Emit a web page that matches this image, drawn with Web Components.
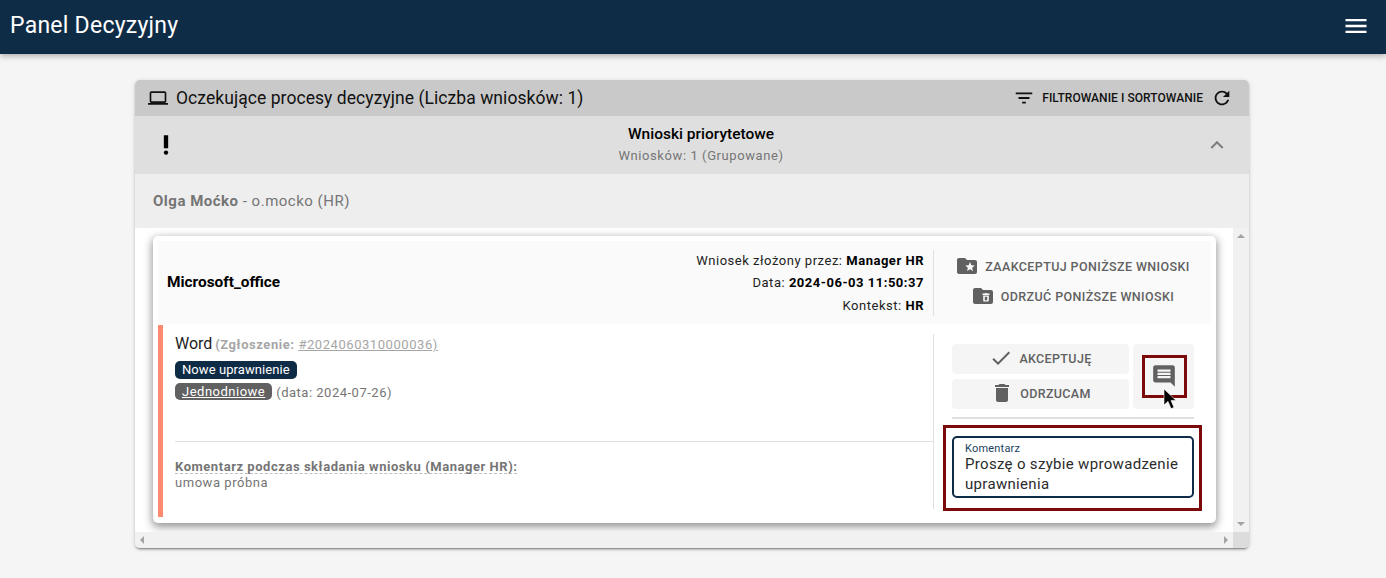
<!DOCTYPE html>
<html lang="pl">
<head>
<meta charset="utf-8">
<title>Panel Decyzyjny</title>
<style>
html, body { margin: 0; height: 100%; overflow: hidden; }
body { background: #f5f5f5; font-family: Roboto, "Liberation Sans", sans-serif; color: #212121; }
</style>
</head>
<body>
<app-toolbar>Panel Decyzyjny</app-toolbar>
<decision-panel>
  <group-header title-text="Wnioski priorytetowe" sub-text="Wniosków: 1 (Grupowane)"></group-header>
  <person-row><b>Olga Moćko</b> - o.mocko (HR)</person-row>
  <scroll-box>
    <request-card>
      <card-header></card-header>
      <request-row></request-row>
    </request-card>
  </scroll-box>
</decision-panel>

<script>
const ICONS = {
  menu: '<path d="M3 18h18v-2H3v2zm0-5h18v-2H3v2zm0-7v2h18V6H3z"/>',
  laptop: '<path d="M20 18c1.1 0 1.99-.9 1.99-2L22 6c0-1.1-.9-2-2-2H4c-1.1 0-2 .9-2 2v10c0 1.1.9 2 2 2H0v2h24v-2h-4zM4 6h16v10H4V6z"/>',
  filter: '<path d="M10 18h4v-2h-4v2zM3 6v2h18V6H3zm3 7h12v-2H6v2z"/>',
  refresh: '<path d="M17.65 6.35C16.2 4.9 14.21 4 12 4c-4.42 0-7.99 3.58-7.99 8s3.57 8 7.99 8c3.73 0 6.84-2.55 7.73-6h-2.08c-.82 2.33-3.04 4-5.65 4-3.31 0-6-2.69-6-6s2.69-6 6-6c1.66 0 3.14.69 4.22 1.78L13 11h7V4l-2.35 2.35z"/>',
  priority: '<circle cx="12" cy="19" r="2"/><path d="M10 3h4v12h-4z"/>',
  less: '<path d="M12 8l-6 6 1.41 1.41L12 10.83l4.59 4.58L18 14z"/>',
  folderstar: '<path d="M20 6h-8l-2-2H4c-1.1 0-1.99.9-1.99 2L2 18c0 1.1.9 2 2 2h16c1.1 0 2-.9 2-2V8c0-1.1-.9-2-2-2zm-2.06 11L15 15.28 12.06 17l.78-3.33-2.59-2.24 3.41-.29L15 8l1.34 3.14 3.41.29-2.59 2.24.78 3.33z"/>',
  foldertrash: '<path fill-rule="evenodd" d="M20 6h-8l-2-2H4c-1.1 0-1.99.9-1.99 2L2 18c0 1.1.9 2 2 2h16c1.1 0 2-.9 2-2V8c0-1.1-.9-2-2-2zM11.5 9.6h2.3l.6-.6h1.2l.6.6h2.3v1.3h-7V9.6zm.7 1.9h5.6v4.9c0 .7-.5 1.2-1.2 1.2h-3.2c-.7 0-1.2-.5-1.2-1.2v-4.9zm1.6 1.2v3.6h2.4v-3.6h-2.4z"/>',
  check: '<path d="M9 16.17L4.83 12l-1.42 1.41L9 19 21 7l-1.41-1.41z"/>',
  trash: '<path d="M6 19c0 1.1.9 2 2 2h8c1.1 0 2-.9 2-2V7H6v12zM19 4h-3.5l-1-1h-5l-1 1H5v2h14V4z"/>',
  comment: '<path d="M21.99 4c0-1.1-.89-2-1.99-2H4c-1.1 0-2 .9-2 2v12c0 1.1.9 2 2 2h14l4 4-.01-18zM18 14H6v-2h12v2zm0-3H6V9h12v2zm0-3H6V6h12v2z"/>'
};

class AppIcon extends HTMLElement {
  connectedCallback() {
    const size = this.getAttribute("size") || 24;
    this.attachShadow({ mode: "open" }).innerHTML = `
      <style>
        :host { display: inline-flex; flex: none; width: ${size}px; height: ${size}px; }
        svg { width: 100%; height: 100%; fill: currentColor; display: block; }
      </style>
      <svg viewBox="0 0 24 24">${ICONS[this.getAttribute("name")]}</svg>`;
  }
}

class AppToolbar extends HTMLElement {
  constructor() {
    super();
    this.attachShadow({ mode: "open" }).innerHTML = `
      <style>
        :host {
          display: flex; align-items: center; justify-content: space-between;
          height: 54px; box-sizing: border-box; padding: 0 16px 0 10px;
          background: #0f2c47; color: #fff; position: relative;
          box-shadow: 0 2px 6px rgba(0,0,0,.3);
        }
        .t { font-size: 23px; letter-spacing: .25px; padding-bottom: 4px; }
        app-icon { margin-top: -2px; }
      </style>
      <span class="t"><slot></slot></span>
      <app-icon name="menu" size="28"></app-icon>`;
  }
}

class DecisionPanel extends HTMLElement {
  constructor() {
    super();
    this.attachShadow({ mode: "open" }).innerHTML = `
      <style>
        :host {
          display: flex; flex-direction: column;
          width: 1114px; height: 468px; margin: 26px 0 0 135px;
          border-radius: 5px; overflow: hidden; background: #eee;
          box-shadow: 0 3px 1px -2px rgba(0,0,0,.25), 0 2px 2px rgba(0,0,0,.16), 0 1px 5px rgba(0,0,0,.14);
        }
        .bar {
          display: flex; align-items: center; height: 36px; flex: none;
          background: #c9c9c9; padding: 0 16px 0 13px; color: #111;
        }
        .title { font-size: 17.5px; margin-left: 8px; flex: 1; letter-spacing: .06px; }
        .filter { margin-right: 7px; }
        .label { font-size: 12px; font-weight: 500; margin-right: 8px; letter-spacing: .05px; }
      </style>
      <div class="bar">
        <app-icon name="laptop" size="20"></app-icon>
        <span class="title">Oczekujące procesy decyzyjne (Liczba wniosków: 1)</span>
        <app-icon class="filter" name="filter" size="22"></app-icon>
        <span class="label">FILTROWANIE I SORTOWANIE</span>
        <app-icon name="refresh" size="22"></app-icon>
      </div>
      <slot></slot>`;
  }
}

class GroupHeader extends HTMLElement {
  connectedCallback() {
    this.attachShadow({ mode: "open" }).innerHTML = `
      <style>
        :host {
          display: grid; grid-template-columns: 62px 1fr 44px; align-items: center;
          height: 58px; flex: none; background: #dfdfdf; color: #000;
        }
        .mid { text-align: center; margin-top: -2px; }
        .a { font-size: 15.5px; font-weight: 500; line-height: 20px; }
        .b { font-size: 13px; color: #757575; line-height: 18px; margin-top: 3px; letter-spacing: .58px; }
        .ic { display: flex; justify-content: center; }
        .less { justify-content: flex-start; color: #808080; margin-left: -1px; }
      </style>
      <div class="ic"><app-icon name="priority" size="26"></app-icon></div>
      <div class="mid">
        <div class="a">${this.getAttribute("title-text")}</div>
        <div class="b">${this.getAttribute("sub-text")}</div>
      </div>
      <div class="ic less"><app-icon name="less" size="26"></app-icon></div>`;
  }
}

class PersonRow extends HTMLElement {
  constructor() {
    super();
    this.attachShadow({ mode: "open" }).innerHTML = `
      <style>
        :host {
          display: flex; align-items: center; height: 54px; flex: none;
          box-sizing: border-box; padding-left: 18px;
          font-size: 15px; color: #757575; letter-spacing: .5px;
        }
        span { white-space: pre; }
      </style>
      <span><slot></slot></span>`;
  }
}

class ScrollBox extends HTMLElement {
  constructor() {
    super();
    this.attachShadow({ mode: "open" }).innerHTML = `
      <style>
        :host {
          display: grid; grid-template-columns: 1fr 16px; grid-template-rows: 1fr 16px;
          flex: 1; min-height: 0; background: #f1f1f1;
        }
        .view { background: #fff; padding: 8px 17px 9px 18px; min-height: 0; min-width: 0; overflow: hidden; }
        .v, .h { display: flex; justify-content: space-between; align-items: center; }
        .v { flex-direction: column; padding: 6px 0; }
        .h { padding: 0 5px; }
        .corner { background: #dcdcdc; }
        i { width: 0; height: 0; border: 4px solid transparent; display: block; }
        .up { border-top: 0; border-bottom-color: #a3a3a3; }
        .down { border-bottom: 0; border-top-color: #a3a3a3; }
        .left { border-left: 0; border-right-color: #a3a3a3; }
        .right { border-right: 0; border-left-color: #a3a3a3; }
      </style>
      <div class="view"><slot></slot></div>
      <div class="v"><i class="up"></i><i class="down"></i></div>
      <div class="h"><i class="left"></i><i class="right"></i></div>
      <div class="corner"></div>`;
  }
}

class RequestCard extends HTMLElement {
  constructor() {
    super();
    this.attachShadow({ mode: "open" }).innerHTML = `
      <style>
        :host {
          display: flex; flex-direction: column; height: 287px; box-sizing: border-box;
          padding: 5px; background: #fff; border-radius: 5px;
          box-shadow: 0 3px 8px 1px rgba(0,0,0,.42);
        }
      </style>
      <slot></slot>`;
  }
}

class CardHeader extends HTMLElement {
  constructor() {
    super();
    this.attachShadow({ mode: "open" }).innerHTML = `
      <style>
        :host {
          display: grid; grid-template-columns: 1fr 278px; align-items: center;
          height: 83px; flex: none; background: #fafafa; color: #000;
        }
        .left { display: flex; justify-content: space-between; align-items: center; padding: 0 9px 0 9px; }
        .name { font-size: 15.4px; font-weight: 700; margin-top: -1px; }
        .info { text-align: right; font-size: 13px; line-height: 22.5px; letter-spacing: .52px; color: #222; margin-top: 2px; }
        .info b { color: #000; }
        .acts {
          border-left: 1px solid #e0e0e0; height: 66px; box-sizing: border-box; padding: 0 0 3px 0;
          display: flex; flex-direction: column;
          justify-content: center; align-items: center; gap: 9px; color: #616161;
          font-size: 12.5px; font-weight: 500; letter-spacing: .39px;
        }
        .acts div { display: flex; align-items: center; height: 21px; }
        .acts app-icon { margin-right: 6px; }
      </style>
      <div class="left">
        <span class="name">Microsoft_office</span>
        <div class="info">Wniosek złożony przez: <b>Manager HR</b><br>Data: <b>2024-06-03 11:50:37</b><br>Kontekst: <b>HR</b></div>
      </div>
      <div class="acts">
        <div><app-icon name="folderstar" size="24"></app-icon>ZAAKCEPTUJ PONIŻSZE WNIOSKI</div>
        <div><app-icon name="foldertrash" size="24"></app-icon>ODRZUĆ PONIŻSZE WNIOSKI</div>
      </div>`;
  }
}

class ActionButton extends HTMLElement {
  constructor() {
    super();
    this.attachShadow({ mode: "open" }).innerHTML = `
      <style>
        :host {
          display: flex; align-items: center; justify-content: center; gap: 6px;
          height: 30px; box-sizing: border-box; padding-bottom: 2px; background: #f5f5f5; border-radius: 4px; color: #616161;
          font-size: 12.5px; font-weight: 500; letter-spacing: .36px;
        }
      </style>
      <slot></slot>`;
  }
}

class CommentButton extends HTMLElement {
  constructor() {
    super();
    this.attachShadow({ mode: "open" }).innerHTML = `
      <style>
        :host {
          display: flex; align-items: center; justify-content: center; position: relative;
          background: #f5f5f5; border-radius: 4px; color: #616161;
        }
        app-icon { margin-top: -2px; }
        .mark { position: absolute; left: 9px; top: 11px; width: 45px; height: 43px; box-sizing: border-box; border: 3px solid #7d0a0a; }
        .cursor { position: absolute; left: 30px; top: 45px; width: 13px; height: 21px; }
      </style>
      <app-icon name="comment" size="26"></app-icon>
      <div class="mark"></div>
      <svg class="cursor" viewBox="0 0 13 21"><path d="M1 0v16l4-3.6 3 7.2 3-1.2-3-7h5z" fill="#000" stroke="#fff" stroke-width=".6"/></svg>`;
  }
}

class CommentField extends HTMLElement {
  constructor() {
    super();
    this.attachShadow({ mode: "open" }).innerHTML = `
      <style>
        :host {
          display: block; position: relative; height: 62px; box-sizing: border-box;
          border: 2px solid #0f2c47; border-radius: 5px; padding: 5px 4px 0 11px; background: #fff;
        }
        .l { font-size: 11px; line-height: 11px; color: #1c3f60; letter-spacing: .2px; }
        .v { font-size: 15px; line-height: 19.5px; color: #2b2b2b; letter-spacing: .32px; margin-top: 1px; }
        .mark { position: absolute; left: -11px; top: -13px; right: -10px; bottom: -15px; border: 3px solid #7d0a0a; box-sizing: border-box; pointer-events: none; }
      </style>
      <div class="l">Komentarz</div>
      <div class="v">Proszę o szybie wprowadzenie uprawnienia</div>
      <div class="mark"></div>`;
  }
}

class RequestRow extends HTMLElement {
  constructor() {
    super();
    this.attachShadow({ mode: "open" }).innerHTML = `
      <style>
        :host {
          display: grid; grid-template-columns: 1fr 278px; flex: none; height: 192px; margin-top: 1px;
          border-left: 5px solid #ff8a70; box-sizing: border-box; color: #757575;
        }
        .main { display: flex; flex-direction: column; padding: 9px 0 0 12px; }
        .head { font-size: 13px; letter-spacing: .56px; color: #a6a6a6; line-height: 20px; }
        .head span { font-size: 16px; color: #1d1d1d; letter-spacing: 0; margin-right: -1px; }
        .head u { font-weight: 400; }
        .chip { display: inline-block; height: 18px; line-height: 18px; padding: 0 7px; border-radius: 5px; color: #fff; font-size: 13px; }
        .l1 { margin-top: 4px; height: 18px; }
        .l1 .chip { letter-spacing: .07px; }
        .l2 { margin-top: 6px; height: 18px; font-size: 13px; letter-spacing: .5px; display: flex; align-items: center; gap: 4px; }
        .l2 .chip { letter-spacing: .5px; height: 17px; line-height: 17px; margin-top: -1px; }
        .navy { background: #0f2c47; }
        .gray { background: #616161; text-decoration: underline; }
        hr { border: 0; border-top: 1px solid #e0e0e0; margin: 40px 0 0; width: 100%; }
        .note { margin-top: 18px; font-size: 13px; line-height: 14px; letter-spacing: .54px; }
        .note b { display: inline-block; border-bottom: 1px dashed #bdbdbd; line-height: 13px; margin-bottom: 2px; }
        .side { padding: 9px 0 8px; }
        .inner { border-left: 1px solid #e0e0e0; height: 100%; box-sizing: border-box; padding: 10px 17px 0 18px; }
        .btns { display: grid; grid-template-columns: 177px 61px; grid-template-rows: 30px 30px; gap: 5px 4px; }
        comment-button { grid-row: 1 / 3; grid-column: 2; }
        .sep { height: 2px; background: #e0e0e0; margin: 8px 0 17px; }
      </style>
      <div class="main">
        <div class="head"><span>Word</span> <b>(Zgłoszenie:</b> <u>#2024060310000036)</u></div>
        <div class="l1"><span class="chip navy">Nowe uprawnienie</span></div>
        <div class="l2"><span class="chip gray">Jednodniowe</span>(data: 2024-07-26)</div>
        <hr>
        <div class="note"><b>Komentarz podczas składania wniosku (Manager HR):</b><br>umowa próbna</div>
      </div>
      <div class="side">
        <div class="inner">
          <div class="btns">
            <action-button><app-icon name="check" size="24"></app-icon>AKCEPTUJĘ</action-button>
            <comment-button></comment-button>
            <action-button><app-icon name="trash" size="24"></app-icon>ODRZUCAM</action-button>
          </div>
          <div class="sep"></div>
          <comment-field></comment-field>
        </div>
      </div>`;
  }
}

customElements.define("app-icon", AppIcon);
customElements.define("app-toolbar", AppToolbar);
customElements.define("decision-panel", DecisionPanel);
customElements.define("group-header", GroupHeader);
customElements.define("person-row", PersonRow);
customElements.define("scroll-box", ScrollBox);
customElements.define("request-card", RequestCard);
customElements.define("card-header", CardHeader);
customElements.define("action-button", ActionButton);
customElements.define("comment-button", CommentButton);
customElements.define("comment-field", CommentField);
customElements.define("request-row", RequestRow);
</script>
</body>
</html>
